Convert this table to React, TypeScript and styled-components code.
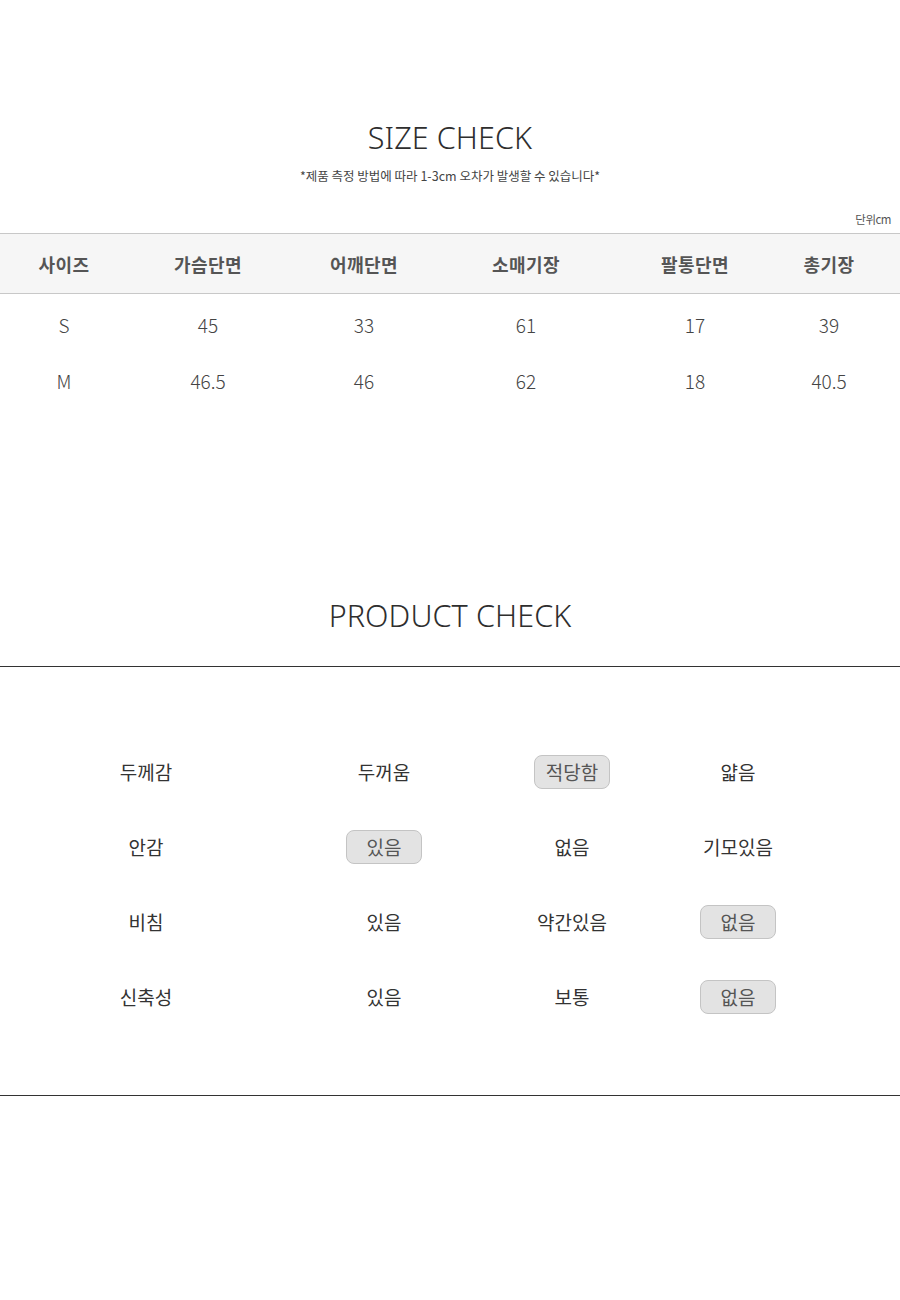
import React from "react";
import styled, { createGlobalStyle } from "styled-components";

const Global = createGlobalStyle`
  html, body { margin: 0; padding: 0; background: #fff; }
  body { font-family: "Noto Sans CJK KR", "Noto Sans", sans-serif; }
`;

const Page = styled.div`
  width: 900px;
  background: #fff;
  padding-top: 112px;
  padding-bottom: 200px;
`;

const Title = styled.h2`
  margin: 0;
  text-align: center;
  font-family: "Noto Sans", "Open Sans", sans-serif;
  font-weight: 300;
  font-size: 30.5px;
  line-height: 50px;
  color: #2e2e2e;
  letter-spacing: 0.1px;
`;

const Sub = styled.p`
  margin: 6px 0 0;
  text-align: center;
  font-size: 12.5px;
  line-height: 16px;
  color: #444;
  letter-spacing: 0;
`;

const Unit = styled.div`
  margin-top: 27px;
  padding-right: 9px;
  text-align: right;
  font-size: 11.5px;
  line-height: 16px;
  color: #555;
  letter-spacing: -0.5px;
`;

const cols = "128px 160px 152px 172px 166px 102px";

const HeadRow = styled.div`
  margin-top: 6px;
  display: grid;
  grid-template-columns: ${cols};
  height: 59px;
  align-items: center;
  background: #f6f6f6;
  border-top: 1px solid #c8c8c8;
  border-bottom: 1px solid #c8c8c8;
`;

const HeadCell = styled.div`
  text-align: center;
  font-size: 18px;
  font-weight: 700;
  color: #555;
  letter-spacing: 0.5px;
`;

const Body = styled.div`
  padding-top: 2px;
`;

const DataRow = styled.div`
  display: grid;
  grid-template-columns: ${cols};
  height: 56px;
  align-items: center;
`;

const DataCell = styled.div`
  text-align: center;
  font-size: 19px;
  color: #444;
  font-family: "Noto Sans CJK KR", "Noto Sans", sans-serif;
  font-weight: 300;
`;

const ProductTitle = styled(Title)`
  margin-top: 182px;
`;

const Rule = styled.div<{ $top: number }>`
  height: 1px;
  background: #333;
  margin-top: ${(p) => p.$top}px;
`;

const CheckGrid = styled.div`
  padding-top: 67px;
  padding-bottom: 61px;
`;

const CheckRow = styled.div`
  display: grid;
  grid-template-columns: 292px 184px 192px 140px;
  height: 75px;
  align-items: center;
`;

const CheckCell = styled.div`
  display: flex;
  justify-content: center;
  align-items: center;
  font-size: 19px;
  color: #333;
`;

const Badge = styled.span<{ $on?: boolean }>`
  display: inline-flex;
  align-items: center;
  justify-content: center;
  width: ${(p) => (p.$on ? "74px" : "auto")};
  height: 32px;
  border-radius: 8px;
  background: ${(p) => (p.$on ? "#e3e3e3" : "transparent")};
  border: 1px solid ${(p) => (p.$on ? "#c4c4c4" : "transparent")};
  color: ${(p) => (p.$on ? "#555" : "#333")};
`;

const headers = ["사이즈", "가슴단면", "어깨단면", "소매기장", "팔통단면", "총기장"];
const rows = [
  ["S", "45", "33", "61", "17", "39"],
  ["M", "46.5", "46", "62", "18", "40.5"],
];

const checks: { label: string; opts: string[]; on: number }[] = [
  { label: "두께감", opts: ["두꺼움", "적당함", "얇음"], on: 1 },
  { label: "안감", opts: ["있음", "없음", "기모있음"], on: 0 },
  { label: "비침", opts: ["있음", "약간있음", "없음"], on: 2 },
  { label: "신축성", opts: ["있음", "보통", "없음"], on: 2 },
];

export default function App() {
  return (
    <Page>
      <Global />
      <Title>SIZE CHECK</Title>
      <Sub>*제품 측정 방법에 따라 1-3cm 오차가 발생할 수 있습니다*</Sub>
      <Unit>단위cm</Unit>
      <HeadRow>
        {headers.map((h) => (
          <HeadCell key={h}>{h}</HeadCell>
        ))}
      </HeadRow>
      <Body>
        {rows.map((r) => (
          <DataRow key={r[0]}>
            {r.map((c, i) => (
              <DataCell key={i}>{c}</DataCell>
            ))}
          </DataRow>
        ))}
      </Body>
      <ProductTitle>PRODUCT CHECK</ProductTitle>
      <Rule $top={26} />
      <CheckGrid>
        {checks.map((c) => (
          <CheckRow key={c.label}>
            <CheckCell>{c.label}</CheckCell>
            {c.opts.map((o, i) => (
              <CheckCell key={o}>
                <Badge $on={i === c.on}>{o}</Badge>
              </CheckCell>
            ))}
          </CheckRow>
        ))}
      </CheckGrid>
      <Rule $top={0} />
    </Page>
  );
}
